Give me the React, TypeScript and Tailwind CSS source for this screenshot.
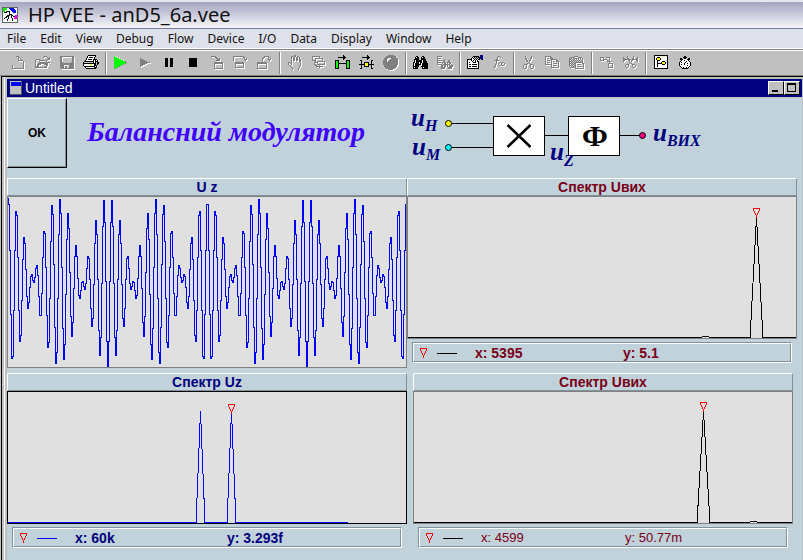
import clsx from 'clsx'
import type { ReactNode } from 'react'

const PALETTE: Record<string, string> = {
  '#': '#808080',
  k: '#000000',
  w: '#ffffff',
  g: '#00ff00',
  y: '#ffff00',
  n: '#000080',
  s: '#c0c0c0',
}

const ICONS = {
  new: [
    '....###......',
    '......##.....',
    '......#.#....',
    '......#..#...',
    '......#####..',
    '...........#.',
    '...........#.',
    '...........#.',
    '...........#.',
    '#..........#.',
    '#..........#.',
    '#..........#.',
    '############.',
  ],
  open: [
    '.........###...',
    '........#...#.#',
    '.............##',
    '.####.......###',
    '#...########...',
    '#..........#...',
    '#...###########',
    '#..##########..',
    '#.####...####..',
    '#.##.......##..',
    '####......##...',
    '############...',
  ],
  save: [
    '##############',
    '##..........##',
    '##..........##',
    '##..........##',
    '##..........##',
    '##..........##',
    '###........###',
    '##############',
    '##############',
    '####.....#####',
    '####.##..#####',
    '####.##..#####',
    '.#############',
  ],
  print: [
    '.....kkkkkkkk...',
    '....kwwwwwwwk...',
    '....kwkkkkwk....',
    '...kwwwwwwwk....',
    '...kwkkkkwkkkk..',
    '..kwwwwwwwkwkwk.',
    '.kkkkkkkkkkwkkk.',
    'kssssssssskwkskk',
    'kkkkkkkkkkkkkskk',
    'kwwwwwwyywwkksk.',
    'kwwwwwwwwwwkkk..',
    '.kkkkkkkkkkkwk..',
    '..kwwwwwwwwkkk..',
    '...kkkkkkkkkk...',
  ],
  run: [
    'gw...........',
    'gggw.........',
    'gggggw.......',
    'gggggggw.....',
    'gggggggggw...',
    'ggggggggggg#.',
    'gggggggggggg#',
    'ggggggggggg#.',
    'ggggggggg#...',
    'ggggggg#.....',
    'ggggg#.......',
    'ggg#.........',
    'g#...........',
  ],
  step: [
    '#.........',
    '###.......',
    '#####.....',
    '#######...',
    '##########',
    '#######...',
    '#####.....',
    '###.......',
    '#.........',
  ],
  pause: [
    'kkk..kkk', 'kkk..kkk', 'kkk..kkk', 'kkk..kkk', 'kkk..kkk',
    'kkk..kkk', 'kkk..kkk', 'kkk..kkk', 'kkk..kkk',
  ],
  stop: [
    'kkkkkkkk', 'kkkkkkkk', 'kkkkkkkk', 'kkkkkkkk', 'kkkkkkkk',
    'kkkkkkkk', 'kkkkkkkk', 'kkkkkkkk', 'kkkkkkkk',
  ],
  into: [
    '#####.......',
    '....##......',
    '.....##.#...',
    '......###...',
    '.....####...',
    '............',
    '...#########',
    '...#########',
    '...#.......#',
    '...#.......#',
    '...#.......#',
    '...#.......#',
    '...#########',
  ],
  over: [
    '###########....',
    '#.........##...',
    '#..........#.#.',
    '#..........###.',
    '#...........#..',
    '...............',
    '..#########....',
    '..#########....',
    '..#.......#....',
    '..#.......#....',
    '..#.......#....',
    '..#########....',
  ],
  out: [
    '.......#####...',
    '......##...##..',
    '.....##....#.#.',
    '.....#.....###.',
    '.....#......#..',
    '.....#.........',
    '##########.....',
    '##########.....',
    '#........#.....',
    '#........#.....',
    '#........#.....',
    '#........#.....',
    '##########.....',
  ],
  hand: [
    '......##.....',
    '...##.##.##..',
    '...#.##.##.#.',
    '...#.##.##.#.',
    '...#.##.##.##',
    '...#.##.##.##',
    '...#.......##',
    '##.#........#',
    '#.##........#',
    '#..#........#',
    '.#..........#',
    '..#........#.',
    '...#.......#.',
    '....#.....#..',
    '....#.....#..',
  ],
  stack: [
    '########.....',
    '#......#.....',
    '#..########..',
    '#..#......#..',
    '####......#..',
    '..##.########',
    '..####......#',
    '..#..#......#',
    '..##.########',
    '...##..#.....',
    '....#######..',
    '.......#.....',
  ],
  flow: [
    '........k......',
    '........kk.....',
    '...kkkkkkkk....',
    '........kk.....',
    '........k......',
    'kkkk.......kkkk',
    'kggk.......kggk',
    'kggk.......kggk',
    'kggkkkkkkkkkggk',
    'kggk.......kggk',
    'kggk.......kggk',
    'kggk.......kggk',
    'kggk.......kggk',
    'kkkk.......kkkk',
  ],
  data: [
    '........k......',
    '........kk.....',
    '...kkkkkkkk....',
    '........kk.....',
    '........k......',
    '.kk.........kk.',
    '..k.........k..',
    '..k..kkkkk..k..',
    '..k..kyyyk..k..',
    'kkkkkkyyykkkkkk',
    '..k..kyyyk..k..',
    '..k..kkkkk..k..',
    '..k.........k..',
    '.kk.........kk.',
  ],
  ball: [
    '.....######....',
    '...##########..',
    '..###########..',
    '.####www#######',
    '.###wws########',
    '####ws#########',
    '####w##########',
    '###############',
    '###############',
    '###############',
    '.#############.',
    '.#############.',
    '..###########..',
    '...#########...',
    '.....#####.....',
  ],
  find: [
    '...kk....kk....',
    '..kwkk..kwkk...',
    '..kkkk..kkkk...',
    '.kkkkk..kkkkk..',
    '.kwkkkkkkwkkk..',
    '.kwkkkkkkwkkkk.',
    'kkwkkkwkkwkkkk.',
    'kwkkkkwkwkkkkkk',
    'kwkkkkkkwkkkkkk',
    'kwkkkk..wkkkkkk',
    'kkkkkk..kkkkkkk',
    'kwkkk....kwkkkk',
    'kkkkk....kkkkkk',
  ],
  findList: [
    '#####...........',
    '#...............',
    '####............',
    '#...............',
    '#####.##...##...',
    '#.....##...##...',
    '####.####.####..',
    '#....#.##.#.##..',
    '#####.#######.#.',
    '....##.##.#.####',
    '....##.##.#.####',
    '....####...####.',
    '....####...####.',
  ],
  props: [
    '.............nnn',
    '......kkkkkk.nnn',
    '.....k.k.k.kknnn',
    '....kwk.k.k.knnn',
    'kkkkkwwkwkwkk.nn',
    'kwwwkwkwkwkw....',
    'kwwwwkwwkwkk....',
    'kwkwwwkkkwwk....',
    'kwwwwwwwwwwk....',
    'kwkkwkkkkkwk....',
    'kwwwwwwwwwwk....',
    'kwkkwkkkkkwk....',
    'kwwwwwwwwwwk....',
    'kkkkkkkkkkkk....',
  ],
  fx: [
    '.....##.....',
    '....#..#....',
    '....#.......',
    '...##.......',
    '.#####......',
    '...#........',
    '...#..##.##.',
    '...#.#..#..#',
    '..#..#..#..#',
    '..#...##.##.',
    '#.#.........',
    '.#..........',
  ],
  cut: [
    '..#.....#..',
    '..#.....#..',
    '..##...##..',
    '...#...#...',
    '...##.##...',
    '....#.#....',
    '.....#.....',
    '....#.#....',
    '.###...###.',
    '#..#...#..#',
    '#..#...#..#',
    '#..#...#..#',
    '.##.....##.',
  ],
  copy: [
    '######.........',
    '#....##........',
    '#.##.###.......',
    '#.....######...',
    '#.###.#....##..',
    '#.....#.##.###.',
    '#.###.#......#.',
    '#.....#.####.#.',
    '#######......#.',
    '......#.####.#.',
    '......#......#.',
    '......########.',
  ],
  paste: [
    '.....####......',
    '.####....####..',
    '#.#.######.#.#.',
    '##.#.#.#.#.#.#.',
    '#.#.#.#.#.#.##.',
    '##.#.#.#.#.#.#.',
    '#.#.#.########.',
    '##.#.##......##',
    '#.#.#.#.####..#',
    '##.#.##.......#',
    '#.#.#.#.#####.#',
    '.######.......#',
    '......#########',
  ],
  link: [
    '####..####...',
    '#..#.....#...',
    '#..####..#...',
    '####...#.#...',
    '.......#####.',
    '.........#...',
    '........#####',
    '........#...#',
    '........#...#',
    '........#...#',
    '........#####',
  ],
  cutWires: [
    '....#.....#....',
    '#...#.....#...#',
    '##..##...##..##',
    '########.######',
    '##...##.##...##',
    '#.....#.#.....#',
    '.......#.......',
    '......#.#......',
    '...###...###...',
    '..#..#...#..#..',
    '..#..#...#..#..',
    '...##.....##...',
  ],
  tree: [
    'kkkkkkkkkkkkkk',
    'kwwwwwwwwwwwwk',
    'kwwkkkwwwwwwwk',
    'kwkyyykwwwwwwk',
    'kwkyyykwwwwwwk',
    'kwwkkkwwwwwwwk',
    'kwwkwwwwkkkwwk',
    'kwwkwwwkyyykwk',
    'kwwkkkkkyyykwk',
    'kwwkwwwwkkkwwk',
    'kwwkwwwwwwwwwk',
    'kwwkwwwwwwwwwk',
    'kwwwwwwwwwwwwk',
    'kkkkkkkkkkkkkk',
  ],
  timer: [
    '.....kk.....',
    '....kkkk....',
    '.kk..kk..kk.',
    '.kkkwwwwkkk.',
    '..kwwkwwwk..',
    '.kwwwwwkwwk.',
    'kwkwwwkwwwwk',
    'kwwwwkwwkwwk',
    'kwkwwkwwwwwk',
    'kwwwwwwwkwwk',
    '.kwwwwwwwwk.',
    '..kwkwwkwk..',
    '...kkkkkk...',
  ],
}

type IconName = keyof typeof ICONS

// One path per colour, one unit square per cell.
function cells(rows: string[], char: string) {
  return rows
    .flatMap((row, y) => [...row].map((c, x) => (c === char ? `M${x} ${y}h1v1h-1z` : '')))
    .join('')
}

function PixelIcon({ name, disabled }: { name: IconName; disabled?: boolean }) {
  const rows = ICONS[name]
  const width = rows[0].length + 1
  const height = rows.length + 1
  return (
    <svg width={width} height={height} viewBox={`0 0 ${width} ${height}`} shapeRendering="crispEdges" aria-hidden>
      {disabled && <path d={cells(rows, '#')} fill="#ffffff" transform="translate(1 1)" />}
      {Object.entries(PALETTE).map(([char, color]) => (
        <path key={char} d={cells(rows, char)} fill={color} />
      ))}
    </svg>
  )
}

const MENU = ['File', 'Edit', 'View', 'Debug', 'Flow', 'Device', 'I/O', 'Data', 'Display', 'Window', 'Help']

const TOOLBAR: { icon: IconName; label: string; disabled?: boolean }[][] = [
  [
    { icon: 'new', label: 'New', disabled: true },
    { icon: 'open', label: 'Open', disabled: true },
    { icon: 'save', label: 'Save', disabled: true },
    { icon: 'print', label: 'Print' },
  ],
  [
    { icon: 'run', label: 'Run' },
    { icon: 'step', label: 'Resume', disabled: true },
    { icon: 'pause', label: 'Pause' },
    { icon: 'stop', label: 'Stop' },
    { icon: 'into', label: 'Step into', disabled: true },
    { icon: 'over', label: 'Step over', disabled: true },
    { icon: 'out', label: 'Step out', disabled: true },
  ],
  [
    { icon: 'hand', label: 'Breakpoint', disabled: true },
    { icon: 'stack', label: 'Call stack', disabled: true },
    { icon: 'flow', label: 'Show execution flow' },
    { icon: 'data', label: 'Show data flow' },
    { icon: 'ball', label: 'Line probe', disabled: true },
  ],
  [
    { icon: 'find', label: 'Find' },
    { icon: 'findList', label: 'Find results', disabled: true },
  ],
  [
    { icon: 'props', label: 'Properties' },
    { icon: 'fx', label: 'Function', disabled: true },
  ],
  [
    { icon: 'cut', label: 'Cut', disabled: true },
    { icon: 'copy', label: 'Copy', disabled: true },
    { icon: 'paste', label: 'Paste', disabled: true },
  ],
  [
    { icon: 'link', label: 'Add line', disabled: true },
    { icon: 'cutWires', label: 'Delete line', disabled: true },
  ],
  [
    { icon: 'tree', label: 'Program explorer' },
    { icon: 'timer', label: 'Profiler' },
  ],
]

function TitleBar() {
  return (
    <header className="flex h-[29px] items-center gap-2.5 border-t-2 border-b border-t-[#e4e6ee] border-b-[#77779a] bg-linear-to-b from-[#a5a4c1] to-[#f6f6f8] pl-0.5">
      <svg width="16" height="16" viewBox="0 0 16 16" shapeRendering="crispEdges" aria-hidden>
        <path d="M0 0h16v16H0z" fill="#fff" />
        <path d="M0 0h16v1H0zM0 0h1v16H0zM15 0h1v16h-1zM0 15h16v1H0z" fill="#666" />
        <path d="M1 1h4v2H3v2H1z" fill="#0f0" />
        <path d="M7 1h4l3 3v2h-3L8 3z" fill="#00f" />
        <path d="M13 8h2v4h-3v-2z" fill="#f0f" />
        <path d="M2 6l5-2 1 3 5 3M8 7l-6 5M8 7l-3 7M9 8l2 6" fill="none" stroke="#111" strokeWidth="1" />
      </svg>
      <h1 className="font-['Noto_Sans',sans-serif] text-[20px] leading-6 text-[#111]">HP VEE - anD5_6a.vee</h1>
    </header>
  )
}

function MenuBar() {
  return (
    <nav className="flex h-5 items-center gap-3.5 border-b border-white bg-[#dfe1ea] pl-[7px] font-['Noto_Sans',sans-serif] text-xs text-[#111]">
      {MENU.map((item) => (
        <button key={item} type="button">
          {item}
        </button>
      ))}
    </nav>
  )
}

function Toolbar() {
  return (
    <div className="flex h-[27px] items-center border-t border-b border-t-[#808080] border-b-[#808080] bg-[#c0c0c0] pl-[7px] shadow-[inset_0_1px_0_#fff]">
      {TOOLBAR.map((group, i) => (
        <div key={group[0].icon} className="flex items-center">
          {i > 0 && (
            <div className="flex w-1.5 justify-center">
              <div className="h-[22px] w-0.5 border-r border-l border-r-white border-l-[#808080]" />
            </div>
          )}
          {group.map(({ icon, label, disabled }) => (
            <button
              key={icon}
              type="button"
              aria-label={label}
              disabled={disabled}
              className="flex h-5 w-6 items-center justify-center"
            >
              <PixelIcon name={icon} disabled={disabled} />
            </button>
          ))}
        </div>
      ))}
    </div>
  )
}

function WindowButton({ label, children }: { label: string; children: ReactNode }) {
  return (
    <button
      type="button"
      aria-label={label}
      className="h-3.5 w-4 border border-t-white border-r-black border-b-black border-l-white bg-[#c0c0c0]"
    >
      <svg width="14" height="12" viewBox="0 0 14 12" shapeRendering="crispEdges" aria-hidden>
        {children}
      </svg>
    </button>
  )
}

function Schematic() {
  return (
    <svg
      width="300"
      height="78"
      viewBox="0 -5 300 78"
      className="font-['Liberation_Serif',serif] font-bold"
      role="img"
      aria-label="Схема модулятора"
    >
      <g fill="none" stroke="#000" shapeRendering="crispEdges">
        <path d="M44 20.5h42M44 44.5h42M138 32.5h24M213 32.5h20" />
        <rect x="86.5" y="13.5" width="51" height="39" fill="#fff" />
        <rect x="161.5" y="13.5" width="51" height="39" fill="#fff" />
      </g>
      <path d="M100.5 22l23 22M123.5 22l-23 22" stroke="#000" strokeWidth="2.5" />
      <g stroke="#000">
        <circle cx="41.5" cy="20.5" r="3" fill="#ff0" />
        <circle cx="41.5" cy="44.5" r="3" fill="#0ff" />
        <circle cx="235.5" cy="32.5" r="3" fill="#ff0080" />
      </g>
      <text x="188" y="43" textAnchor="middle" fontSize="30">
        Ф
      </text>
      <g fill="#000080" fontStyle="italic" fontSize="25">
        <text x="4" y="23">
          u<tspan dy="5" fontSize="16">Н</tspan>
        </text>
        <text x="5" y="52">
          u<tspan dy="5" fontSize="16">М</tspan>
        </text>
        <text x="143" y="57">
          u<tspan dy="6" fontSize="16">Z</tspan>
        </text>
        <text x="246" y="38">
          u<tspan dy="5" fontSize="16">ВИХ</tspan>
        </text>
      </g>
    </svg>
  )
}

type Tone = 'navy' | 'maroon'

function Panel({ title, tone, className, children }: { title: string; tone: Tone; className?: string; children: ReactNode }) {
  return (
    <section className={clsx(tone === 'navy' ? 'text-[#000080]' : 'text-[#780018]', className)}>
      <h2 className="h-[18px] border border-t-white border-r-[#80929b] border-b-[#80929b] border-l-white text-center text-sm leading-4 font-bold">
        {title}
      </h2>
      {children}
    </section>
  )
}

function Plot({ width, height, dark, children }: { width: number; height: number; dark?: boolean; children: ReactNode }) {
  return (
    <div className={clsx('border bg-[#e0e0e0]', dark ? 'border-black' : 'border-[#808080]')}>
      <svg
        viewBox={`0 0 ${width} ${height}`}
        height={height}
        preserveAspectRatio="none"
        shapeRendering="crispEdges"
        className="block w-full"
        aria-hidden
      >
        {children}
      </svg>
    </div>
  )
}

function Marker({ x, y }: { x: number; y: number }) {
  return <path d={`M${x - 3} ${y}h6v2l-2 3l-1 3l-1-3l-2-3z`} fill="none" stroke="#f00" />
}

function Readout({ x, y, trace, light }: { x: string; y: string; trace: string; light?: boolean }) {
  return (
    <div className="mx-[5px] mt-[3px] border border-t-[#80929b] border-r-white border-b-white border-l-[#80929b]">
      <div
        className={clsx(
          'flex h-[19px] items-center border border-t-white border-r-[#80929b] border-b-[#80929b] border-l-white pl-1.5 leading-4',
          light ? 'text-[13px]' : 'text-sm font-bold',
        )}
      >
        <svg width="38" height="12" viewBox="0 0 38 12" shapeRendering="crispEdges" className="mr-[17px] shrink-0" aria-hidden>
          <Marker x={3.5} y={1.5} />
          <path d="M17 6.5h20" stroke={trace} />
        </svg>
        <span className="w-2/5">{x}</span>
        <span>{y}</span>
      </div>
    </div>
  )
}

// Balanced modulation: carrier period 7.96, envelope period 99.5, both in plot units.
function wave(t: number) {
  const v = Math.cos((2 * Math.PI * t) / 7.96) * Math.cos((2 * Math.PI * t) / 99.5)
  return Math.round(84.5 - 84.5 * v) + 0.5
}

const WAVE = `M0.5 0.5${Array.from({ length: 398 }, (_, t) => `V${wave(t + 0.5)}h1`).join('')}`

export default function App() {
  return (
    <div className="flex min-h-screen flex-col bg-[#c0c0c0] font-['Liberation_Sans',sans-serif]">
      <TitleBar />
      <MenuBar />
      <Toolbar />
      <main className="ml-px flex grow flex-col border-t border-l border-black">
        <div className="ml-0.5 flex grow flex-col border-l border-white pt-0.5 pr-px pl-0.5">
          <div className="flex h-[18px] items-center bg-[#000080] pr-0.5 pl-[3px]">
            <svg width="12" height="14" viewBox="0 0 12 14" shapeRendering="crispEdges" aria-hidden>
              <path d="M0 0h12v14H0z" fill="#c0c0c0" />
              <path d="M1 1h10v4H1z" fill="#00f" />
              <path d="M11 0h1v14H0v-1h11z" fill="#555" />
            </svg>
            <h2 className="grow pl-[3px] text-sm leading-4 text-white">Untitled</h2>
            <WindowButton label="Minimize">
              <path d="M3 8h6v2H3z" />
            </WindowButton>
            <WindowButton label="Maximize">
              <path d="M2 1h9v9H2zM3 3v6h7V3z" fillRule="evenodd" />
            </WindowButton>
          </div>
          <div className="mt-px grow bg-[#c2d2da] pb-3">
            <div className="flex h-20 items-start">
              <button
                type="button"
                className="h-[70px] w-[60px] border border-t-white border-r-black border-b-black border-l-white text-xs font-bold shadow-[inset_-1px_-1px_0_#80929b]"
              >
                OK
              </button>
              <div className="w-[340px] pt-4 pl-5">
                <h1 className="font-['Liberation_Serif',serif] text-[28px] leading-9 font-bold whitespace-nowrap text-[#4000ff] italic">
                  Балансний модулятор
                </h1>
              </div>
              <Schematic />
            </div>

            <div className="grid grid-cols-[400fr_390fr] gap-y-[5px] pr-[5px]">
              <Panel title="U z" tone="navy">
                <Plot width={398} height={170}>
                  <path d={WAVE} fill="none" stroke="#00f" />
                </Plot>
              </Panel>

              <Panel title="Спектр Uвих" tone="maroon">
                <Plot width={388} height={141}>
                  <path
                    d="M0 140.5h294M294 139.5h7M301 140.5h41.5v-8l6-112l6 112v8H388"
                    fill="none"
                    stroke="#000"
                  />
                  <Marker x={348.5} y={11.5} />
                </Plot>
                <Readout x="x: 5395" y="y: 5.1" trace="#000" />
              </Panel>

              <Panel title="Спектр Uz" tone="navy">
                <Plot width={398} height={131} dark>
                  <path
                    d="M0 130.5h188.5v-12l4-99l4 99v12h23v-12l4-99l4 99v12H340"
                    fill="none"
                    stroke="#00f"
                  />
                  <Marker x={223.5} y={12.5} />
                </Plot>
                <Readout x="x: 60k" y="y: 3.293f" trace="#00f" />
              </Panel>

              <Panel title="Спектр Uвих" tone="maroon" className="mr-1 ml-1.5">
                <Plot width={378} height={131}>
                  <path
                    d="M0 130.5h283.5v-8l6-103l6 103v8H336M336 129.5h7M343 130.5h35"
                    fill="none"
                    stroke="#000"
                  />
                  <Marker x={289.5} y={10.5} />
                </Plot>
                <Readout x="x: 4599" y="y: 50.77m" trace="#000" light />
              </Panel>
            </div>
          </div>
        </div>
      </main>
    </div>
  )
}
